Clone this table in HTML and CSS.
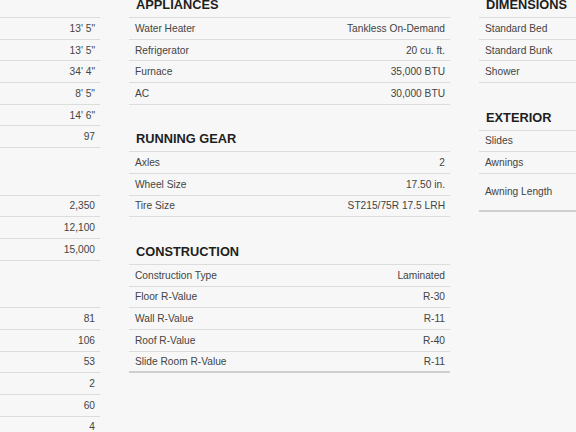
FILE: index.html
```html
<!DOCTYPE html>
<html lang="en">
<head>
<meta charset="utf-8">
<title>Specifications</title>
<link rel="stylesheet" href="styles.css">
</head>
<body>
<div class="page">
  <div class="col">
    <section class="section">
      <h2 class="heading">MEASUREMENTS</h2>
      <div class="row"><span class="label">Exterior Height</span><span class="value">13' 5"</span></div>
      <div class="row"><span class="label">Exterior Height w/ AC</span><span class="value">13' 5"</span></div>
      <div class="row"><span class="label">Exterior Length</span><span class="value">34' 4"</span></div>
      <div class="row"><span class="label">Exterior Width</span><span class="value">8' 5"</span></div>
      <div class="row"><span class="label">Awning Size</span><span class="value">14' 6"</span></div>
      <div class="row"><span class="label">Interior Height (in.)</span><span class="value">97</span></div>
    </section>
    <section class="section">
      <h2 class="heading">WEIGHTS</h2>
      <div class="row"><span class="label">Hitch Weight</span><span class="value">2,350</span></div>
      <div class="row"><span class="label">Unloaded Weight</span><span class="value">12,100</span></div>
      <div class="row"><span class="label">GVWR</span><span class="value">15,000</span></div>
    </section>
    <section class="section">
      <h2 class="heading">CAPACITIES</h2>
      <div class="row"><span class="label">Fresh Water Capacity</span><span class="value">81</span></div>
      <div class="row"><span class="label">Grey Water Capacity</span><span class="value">106</span></div>
      <div class="row"><span class="label">Black Water Capacity</span><span class="value">53</span></div>
      <div class="row"><span class="label">Propane Tanks</span><span class="value">2</span></div>
      <div class="row"><span class="label">Propane Capacity</span><span class="value">60</span></div>
      <div class="row"><span class="label">Sleeps</span><span class="value">4</span></div>
    </section>
  </div>

  <div class="col">
    <section class="section">
      <h2 class="heading">APPLIANCES</h2>
      <div class="row"><span class="label">Water Heater</span><span class="value">Tankless On-Demand</span></div>
      <div class="row"><span class="label">Refrigerator</span><span class="value">20 cu. ft.</span></div>
      <div class="row"><span class="label">Furnace</span><span class="value">35,000 BTU</span></div>
      <div class="row"><span class="label">AC</span><span class="value">30,000 BTU</span></div>
    </section>
    <section class="section">
      <h2 class="heading">RUNNING GEAR</h2>
      <div class="row"><span class="label">Axles</span><span class="value">2</span></div>
      <div class="row"><span class="label">Wheel Size</span><span class="value">17.50 in.</span></div>
      <div class="row"><span class="label">Tire Size</span><span class="value">ST215/75R 17.5 LRH</span></div>
    </section>
    <section class="section">
      <h2 class="heading">CONSTRUCTION</h2>
      <div class="row"><span class="label">Construction Type</span><span class="value">Laminated</span></div>
      <div class="row"><span class="label">Floor R-Value</span><span class="value">R-30</span></div>
      <div class="row"><span class="label">Wall R-Value</span><span class="value">R-11</span></div>
      <div class="row"><span class="label">Roof R-Value</span><span class="value">R-40</span></div>
      <div class="row"><span class="label">Slide Room R-Value</span><span class="value">R-11</span></div>
    </section>
  </div>

  <div class="col">
    <section class="section">
      <h2 class="heading">DIMENSIONS</h2>
      <div class="row"><span class="label">Standard Bed</span><span class="value">60" x 80"</span></div>
      <div class="row"><span class="label">Standard Bunk</span><span class="value">30" x 74"</span></div>
      <div class="row"><span class="label">Shower</span><span class="value">36" x 30"</span></div>
    </section>
    <section class="section">
      <h2 class="heading">EXTERIOR</h2>
      <div class="row"><span class="label">Slides</span><span class="value">3</span></div>
      <div class="row"><span class="label">Awnings</span><span class="value">1</span></div>
      <div class="row row-tall"><span class="label">Awning Length</span><span class="value">18' Power<br>with LED</span></div>
    </section>
  </div>
</div>
</body>
</html>
```

FILE: styles.css
```css
html, body {
  margin: 0;
  padding: 0;
  overflow: hidden;
  background: #f7f7f7;
}

body {
  font-family: "Liberation Sans", Arial, sans-serif;
  color: #444;
}

.page {
  display: flex;
  gap: 29px;
  margin-left: -221px;
  margin-top: -3px;
}

.col {
  flex: none;
  width: 321px;
}

.section + .section {
  margin-top: 26.5px;
}

.heading {
  margin: 0;
  padding: 0 7px 4px;
  font-size: 12.8px;
  line-height: 16px;
  font-weight: bold;
  color: #1e1e1e;
  border-bottom: 1px solid #dcdcdc;
}

.row {
  display: flex;
  justify-content: space-between;
  align-items: center;
  box-sizing: border-box;
  height: 21.7px;
  padding: 1px 5px 0 6px;
  border-bottom: 1px solid #dcdcdc;
  font-size: 10.2px;
  line-height: 12px;
}

.row-tall {
  height: 38px;
}

.value {
  text-align: right;
}

.col:nth-child(n+2) .section:last-child .row:last-child {
  border-bottom: 2px solid #cfcfcf;
}
```
